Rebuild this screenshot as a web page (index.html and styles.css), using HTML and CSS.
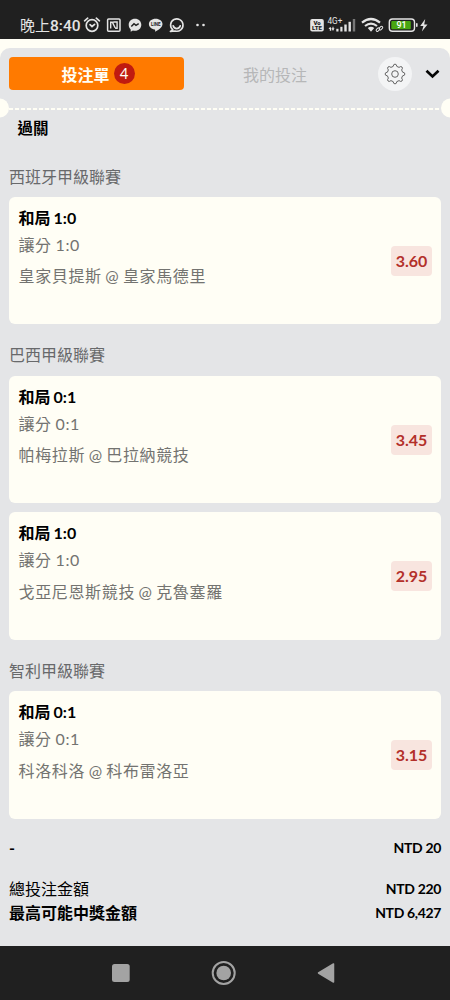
FILE: index.html
```html
<!DOCTYPE html>
<html lang="zh-Hant">
<head>
<meta charset="utf-8">
<title>投注單</title>
<link rel="stylesheet" href="styles.css">
</head>
<body>
<header class="status">
  <span class="clock">晚上<b>8:40</b></span>
  <svg class="alerts" width="124" height="20" viewBox="83 15 124 20">
    <g fill="none" stroke="#e4e4e4" stroke-width="1.7" stroke-linecap="round">
      <circle cx="92" cy="25.5" r="5.8"/>
      <path d="M84.600 20.800l3.100-2.600M99.400 20.800l-3.100-2.600M90 24.700l2 1.800 2.600-2.200"/>
      <rect x="107.600" y="18.900" width="12.400" height="12.400" rx="1" stroke-width="1.500"/>
      <path d="M110.700 28.400v-6.200h1.700l2.700 5.600M113.200 22h3.900v6.300h-2" stroke-width="1.400" stroke-linecap="butt"/>
      <path d="M172.800 29.800a6.200 6.200 0 1 1 2.200 1.200l-4.600.5z" stroke-width="1.600" stroke-linejoin="round"/>
      <path d="M173.200 25.800a3.600 3.600 0 0 0 7 0"/>
    </g>
    <g fill="#e4e4e4">
      <path d="M135 18.800c-3.700 0-6.300 2.600-6.300 6 0 2 .8 3.500 2 4.600v2.300l2.200-1.100c5 1.200 8.400-1.900 8.400-5.800 0-3.400-2.600-6-6.300-6z"/>
      <path d="M155.700 18.800c-3.900 0-6.800 2.300-6.800 5.300 0 2.900 2.300 4.900 5.700 5.400.9.200.5 1.100.5 2.300 3.300-1.700 7.400-4.200 7.400-7.700 0-3-3-5.300-6.800-5.300z"/>
      <circle cx="197.500" cy="25" r="1.300"/><circle cx="203.500" cy="25" r="1.300"/>
    </g>
    <path d="M131.300 26.500l2.700-2.800 2 1.700 2.700-1.800" fill="none" stroke="#202020" stroke-width="1.500"/>
    <text class="line-mark" x="155.700" y="25.800" text-anchor="middle">LINE</text>
  </svg>
  <svg class="system" width="120" height="20" viewBox="309 15 120 20">
    <rect x="310.200" y="19" width="13.600" height="12.400" rx="2" fill="#e4e4e4"/>
    <text class="volte" x="317" y="24.800" text-anchor="middle">Vo</text>
    <text class="volte" x="317" y="30.400" text-anchor="middle">LTE</text>
    <text class="network" x="327.500" y="23.700">4G+</text>
    <g fill="#e4e4e4">
      <path d="M328.500 29l1.700-2.200 1 1.500v2.500h-1.400v-1.800zM331.500 28.200h1v-1.500h1v1.500h1l-1.500 2.800z"/>
      <rect x="336.300" y="28.800" width="2.200" height="2.700"/><rect x="340.300" y="26.800" width="2.200" height="4.700"/>
      <rect x="344.300" y="24.500" width="2.400" height="7"/><rect x="348.500" y="21.800" width="2.400" height="9.700"/>
      <rect x="352.800" y="19" width="2.400" height="12.500" fill="#777"/>
      <path d="M371 31.800l-3.200-3.800q3.200-2.400 6.400 0z"/>
    </g>
    <g fill="none" stroke="#e4e4e4" stroke-width="2.200">
      <path d="M362 22.600q9-7.200 18 0M365 26q6-4.800 12 0"/>
      <rect x="376.200" y="28.500" width="4" height="2.300" rx="1.100" stroke-width="1" transform="rotate(-45 378 30)"/>
      <rect x="378.800" y="27" width="4" height="2.300" rx="1.100" stroke-width="1" transform="rotate(-45 380.800 28)"/>
      <rect x="389.300" y="19" width="25.200" height="12.200" rx="3.200" stroke-width="1.400"/>
    </g>
    <rect x="391.300" y="21" width="19.500" height="8.200" rx="1" fill="#48a611"/>
    <rect x="416" y="23" width="1.600" height="4" rx=".8" fill="#e4e4e4"/>
    <text class="charge" x="401.600" y="28.400" text-anchor="middle">91</text>
    <path d="M425.200 19l-5 7h3.200l-1.500 5.600 5.600-7.200h-3.300z" fill="#e4e4e4"/>
  </svg>
</header>

<main class="slip">
  <nav class="tabs">
    <div class="tab tab-active">投注單<span class="count">4</span></div>
    <div class="tab">我的投注</div>
    <div class="settings">
      <svg width="22" height="22" viewBox="-11 -11 22 22" fill="none" stroke="#555" stroke-width=".9" stroke-linejoin="round">
        <circle r="3.300"/>
        <path d="M-1.900-7.500Q-1.600-9.900 0-9.900T1.900-7.500Q3-7.200 4-6.600Q5.900-8.100 7-7T6.600-4Q7.200-3 7.500-1.900Q9.900-1.600 9.900 0T7.500 1.900Q7.200 3 6.600 4Q8.100 5.900 7 7T4 6.600Q3 7.200 1.900 7.500Q1.600 9.900 0 9.900T-1.900 7.500Q-3 7.200-4 6.600Q-5.900 8.100-7 7T-6.600 4Q-7.200 3-7.500 1.900Q-9.900 1.600-9.900 0T-7.500-1.900Q-7.200-3-6.600-4Q-8.100-5.900-7-7T-4-6.600Q-3-7.200-1.900-7.500Z"/>
      </svg>
    </div>
    <svg class="chevron" width="15" height="10" viewBox="0 0 15 10"><path d="M1.500 1.700l6 5.700 6-5.700" fill="none" stroke="#050505" stroke-width="2.700"/></svg>
  </nav>

  <div class="tear">
    <svg width="450" height="20" viewBox="0 0 450 20">
      <path d="M9 11H441" stroke="#fffef5" stroke-width="2.200" stroke-dasharray="4 2"/>
      <circle cx="-.5" cy="10" r="9.500" fill="#fffef5"/><circle cx="450.500" cy="10" r="9.500" fill="#fffef5"/>
    </svg>
  </div>

  <h1 class="kind">過關</h1>

  <h2 class="league">西班牙甲級聯賽</h2>
  <section class="bet">
    <div class="detail"><h3 class="pick">和局 1:0</h3><p class="market">讓分 1:0</p><p class="match">皇家貝提斯 @ 皇家馬德里</p></div>
    <span class="odds">3.60</span>
  </section>

  <h2 class="league">巴西甲級聯賽</h2>
  <section class="bet">
    <div class="detail"><h3 class="pick">和局 0:1</h3><p class="market">讓分 0:1</p><p class="match">帕梅拉斯 @ 巴拉納競技</p></div>
    <span class="odds">3.45</span>
  </section>
  <section class="bet bet-next">
    <div class="detail"><h3 class="pick">和局 1:0</h3><p class="market">讓分 1:0</p><p class="match">戈亞尼恩斯競技 @ 克魯塞羅</p></div>
    <span class="odds">2.95</span>
  </section>

  <h2 class="league">智利甲級聯賽</h2>
  <section class="bet">
    <div class="detail"><h3 class="pick">和局 0:1</h3><p class="market">讓分 0:1</p><p class="match">科洛科洛 @ 科布雷洛亞</p></div>
    <span class="odds">3.15</span>
  </section>

  <div class="totals">
    <div class="row row-stake"><b>-</b><span class="sum">NTD 20</span></div>
    <div class="row"><span>總投注金額</span><span class="sum">NTD 220</span></div>
    <div class="row"><b>最高可能中獎金額</b><span class="sum">NTD 6,427</span></div>
  </div>
</main>

<footer class="keys">
  <svg width="224" height="26" viewBox="111 960 224 26" fill="#a3a3a3">
    <rect x="112" y="964" width="17.700" height="18" rx="2.500"/>
    <circle cx="223.700" cy="973" r="11" fill="none" stroke="#a3a3a3" stroke-width="2"/>
    <circle cx="223.700" cy="973" r="7.300"/>
    <path d="M318.500 973L333.500 964V982Z" stroke="#a3a3a3" stroke-width="1.500" stroke-linejoin="round"/>
  </svg>
</footer>
</body>
</html>
```
FILE: styles.css
```css
* { box-sizing: border-box; }

body {
  margin: 0;
  width: 450px;
  height: 1000px;
  overflow: hidden;
  display: flex;
  flex-direction: column;
  background: #fffef5;
  font-family: Lato, "Noto Sans CJK TC", sans-serif;
  font-size: 16px;
  color: #111;
}

h1, h2, h3, p { margin: 0; font-size: 16px; font-weight: 400; }

.status {
  height: 39px;
  flex: none;
  display: flex;
  padding: 15px 21px 0 20px;
  background: #202020;
  color: #e4e4e4;
}

.clock {
  width: 63px;
  font: 15px/22px Roboto, "Noto Sans CJK TC", sans-serif;
  white-space: nowrap;
}
.clock b { font-size: 15.500px; font-weight: 500; }
.system { margin-left: auto; }

.line-mark { font: 700 4.500px Roboto, sans-serif; fill: #202020; }
.volte { font: 900 6px Roboto, sans-serif; fill: #202020; }
.network { font: 8.200px Roboto, sans-serif; fill: #e4e4e4; }
.charge { font: 500 9px Roboto, sans-serif; fill: #fff; }

.slip {
  height: 898px;
  flex: none;
  margin-top: 9px;
  background: #e4e5e7;
  border-radius: 10px 10px 0 0;
}

.tabs {
  height: 50px;
  display: flex;
  align-items: center;
  padding: 1px 10px 0 9px;
}
.tab {
  width: 175px;
  height: 33px;
  display: flex;
  align-items: center;
  justify-content: center;
  border-radius: 4px;
  color: #b6b7b8;
  padding-left: 7px;
}
.tab-active {
  background: #ff7a00;
  color: #fffef5;
  font-weight: 700;
  padding-left: 3px;
}
.count {
  width: 21px;
  height: 21px;
  margin-left: 4px;
  border-radius: 50%;
  background: #c01b10;
  text-align: center;
  font-size: 15px;
  font-weight: 400;
  line-height: 21px;
}
.settings {
  width: 34px;
  height: 34px;
  margin-left: 19px;
  display: grid;
  place-items: center;
  border-radius: 50%;
  background: #f3f4f5;
}
.chevron { margin: 1px 0 0 auto; width: 15px; }

.tear { height: 20px; }
.tear svg { display: block; }

.kind {
  height: 39px;
  padding-left: 17.500px;
  line-height: 20px;
  font-size: 15.500px;
  font-weight: 700;
  color: #000;
}

.league {
  height: 51.500px;
  padding: 19px 0 0 9px;
  line-height: 24px;
  color: #68696b;
}
.kind + .league { height: 39.500px; padding-top: 8px; }

.bet {
  height: 127.500px;
  margin: 0 9px;
  padding: 9px 9px 0 9.500px;
  display: flex;
  justify-content: space-between;
  background: #fffef5;
  border-radius: 6px;
}
.bet-next { margin-top: 9px; }

.pick { line-height: 24px; font-weight: 700; word-spacing: -.8px; color: #000; }
.market { margin-top: 3px; line-height: 24px; letter-spacing: .5px; word-spacing: -.5px; color: #737370; }
.match { margin-top: 7.500px; line-height: 24px; letter-spacing: .65px; word-spacing: -1.200px; color: #737370; }

.odds {
  width: 41px;
  height: 30px;
  margin-top: 40px;
  border-radius: 4px;
  background: #f8e5df;
  color: #b3302a;
  font-weight: 700;
  line-height: 30px;
  text-align: center;
}

.totals { padding: 17.500px 9px 0; color: #000; }
.row {
  display: flex;
  justify-content: space-between;
  height: 24px;
  line-height: 24px;
}
.row-stake { margin-bottom: 17px; }
.sum { font-size: 14px; font-weight: 700; letter-spacing: -.35px; }

.keys {
  height: 54px;
  flex: none;
  padding: 14px 0 0 111px;
  background: #202020;
}
```
